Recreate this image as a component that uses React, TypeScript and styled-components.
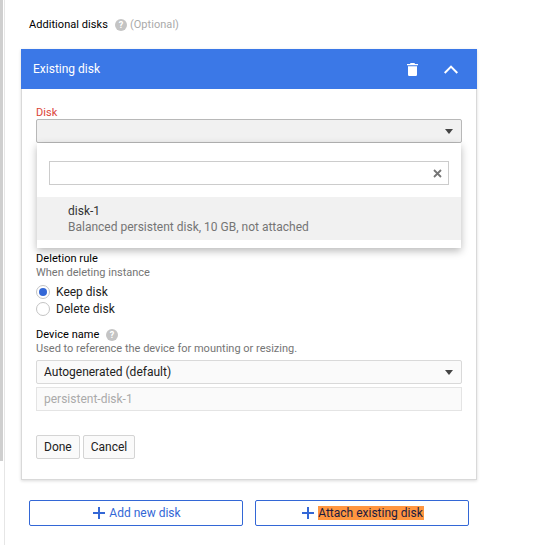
import React from "react";
import styled, { createGlobalStyle } from "styled-components";

const GlobalStyle = createGlobalStyle`
  html, body {
    margin: 0;
    padding: 0;
    background: #fff;
  }
  body {
    font-family: Roboto, "Liberation Sans", sans-serif;
    font-size: 12px;
    color: #212121;
  }
  * {
    box-sizing: border-box;
  }
`;

const Page = styled.div`
  width: 550px;
  height: 545px;
  overflow: hidden;
  display: flex;
`;

const Rail = styled.div`
  width: 5px;
  flex: none;
  height: 545px;
  background: linear-gradient(to right, #cfcfcf 0 3px, #fff 3px);
  background-size: 100% 461px;
  background-repeat: no-repeat;
  border-right: 1px solid #e6e6e6;
`;

const Content = styled.div`
  width: 472px;
  margin-left: 16px;
  padding-top: 18px;
  display: flex;
  flex-direction: column;
`;

const Heading = styled.div`
  display: flex;
  align-items: center;
  height: 13px;
  margin-left: 8px;
  font-size: 11px;
  letter-spacing: 0.05px;
  color: #000;
`;

const Optional = styled.span`
  color: #aaa;
  margin-left: 3px;
`;

const Card = styled.div`
  width: 456px;
  margin-top: 18px;
  box-shadow: 0 1px 3px rgba(0, 0, 0, 0.15);
`;

const CardHeader = styled.div`
  height: 40px;
  background: #3b78e7;
  color: #fff;
  font-size: 12px;
  padding: 0 19px 0 12px;
  display: flex;
  align-items: center;
`;

const CardTitle = styled.span`
  flex: 1;
`;

const HeaderActions = styled.div`
  display: flex;
  align-items: center;
  gap: 26px;
`;

const CardBody = styled.div`
  position: relative;
  height: 391px;
  padding: 16px 14px 0 14px;
  border: 1px solid #d9d9d9;
  border-top: none;
`;

const FieldLabel = styled.div<{ $error?: boolean }>`
  font-size: 11px;
  line-height: ${(p) => (p.$error ? "13px" : "14px")};
  padding-top: ${(p) => (p.$error ? "1px" : "0")};
  letter-spacing: 0.05px;
  color: ${(p) => (p.$error ? "#db4437" : "#000")};
  display: flex;
  align-items: center;
`;

const Hint = styled.div`
  font-size: 11px;
  line-height: 14px;
  color: #757575;
`;

const Select = styled.div<{ $active?: boolean }>`
  height: 24px;
  width: 426px;
  display: flex;
  align-items: center;
  padding: 0 7px;
  background: ${(p) => (p.$active ? "#f1f1f1" : "#fafafa")};
  border: 1px solid ${(p) => (p.$active ? "#b8b8b8" : "#d9d9d9")};
  border-radius: 2px;
  font-size: 12px;
  color: #212121;
`;

const SelectValue = styled.span`
  flex: 1;
`;

const Caret = styled.span`
  width: 0;
  height: 0;
  margin-right: 1px;
  border-left: 4px solid transparent;
  border-right: 4px solid transparent;
  border-top: 5px solid #444;
`;

const Dropdown = styled.div`
  position: absolute;
  top: 54px;
  left: 15px;
  width: 424px;
  height: 105px;
  background: #fff;
  box-shadow: 0 3px 8px rgba(0, 0, 0, 0.28);
  padding-top: 18px;
  z-index: 2;
`;

const SearchBox = styled.div`
  width: 400px;
  height: 24px;
  margin-left: 12px;
  border: 1px solid #ccc;
  display: flex;
  align-items: center;
  justify-content: flex-end;
  padding-right: 6px;
`;

const Option = styled.div`
  margin-top: 12px;
  height: 43px;
  background: #f1f1f1;
  padding: 6px 0 0 31px;
`;

const OptionName = styled.div`
  font-size: 12px;
  line-height: 16px;
  color: #333;
`;

const OptionDetail = styled.div`
  font-size: 12px;
  line-height: 17px;
  color: #757575;
`;

const RuleSection = styled.div`
  margin-top: 109px;
`;

const RadioList = styled.div`
  margin-top: 5px;
  display: flex;
  flex-direction: column;
  gap: 3px;
`;

const RadioRow = styled.div`
  display: flex;
  align-items: center;
  gap: 6px;
  height: 14px;
  font-size: 12px;
  color: #212121;
`;

const RadioCircle = styled.span<{ $checked?: boolean }>`
  width: 14px;
  height: 14px;
  border-radius: 50%;
  border: 1px solid #c4c4c4;
  background: #fff;
  display: flex;
  align-items: center;
  justify-content: center;
  &::after {
    content: "";
    width: 8px;
    height: 8px;
    border-radius: 50%;
    background: ${(p) => (p.$checked ? "#3367d6" : "transparent")};
  }
`;

const DeviceSection = styled.div`
  margin-top: 12px;
`;

const DeviceControls = styled.div`
  margin-top: 4px;
  display: flex;
  flex-direction: column;
  gap: 3px;
`;

const DisabledInput = styled.div`
  height: 24px;
  width: 426px;
  padding: 0 7px;
  display: flex;
  align-items: center;
  background: #fafafa;
  border: 1px solid #e4e4e4;
  font-size: 12px;
  color: #aaa;
`;

const FormActions = styled.div`
  margin-top: 24px;
  display: flex;
  gap: 3px;
`;

const PlainButton = styled.button`
  height: 24px;
  padding: 0 7px;
  background: #fafafa;
  border: 1px solid #d4d4d4;
  border-radius: 2px;
  font-family: inherit;
  font-size: 12px;
  color: #212121;
`;

const BottomBar = styled.div`
  margin: 20px 0 0 8px;
  display: flex;
  gap: 12px;
`;

const OutlineButton = styled.button`
  width: 214px;
  height: 26px;
  background: #fff;
  border: 1px solid #3367d6;
  border-radius: 2px;
  font-family: inherit;
  font-size: 12px;
  color: #3367d6;
  display: flex;
  align-items: center;
  justify-content: center;
  gap: 4px;
  padding: 0 0 0 2px;
`;

const Highlight = styled.span`
  background: #ff9640;
  color: #1a1a40;
  padding: 0 1px 0 0;
  line-height: 14px;
`;

const HelpIcon = ({ left = 7 }: { left?: number }) => (
  <svg width="12" height="12" viewBox="0 0 12 12" style={{ marginLeft: left }}>
    <circle cx="6" cy="6" r="6" fill="#c4c4c4" />
    <text x="6" y="9.2" fontSize="9" fontWeight="700" textAnchor="middle" fill="#fff" fontFamily="Roboto">
      ?
    </text>
  </svg>
);

const TrashIcon = () => (
  <svg width="11" height="13" viewBox="0 0 11 13" fill="#fff">
    <path d="M3.6 0h3.8l.7.9H11v1.4H0V.9h2.9z" />
    <path d="M1 3.2h9v8.2c0 .9-.7 1.6-1.6 1.6H2.6c-.9 0-1.6-.7-1.6-1.6z" />
  </svg>
);

const ChevronIcon = () => (
  <svg width="14" height="9" viewBox="0 0 14 9" fill="none" stroke="#fff" strokeWidth="2">
    <path d="M.7 8 7 1.6 13.3 8" />
  </svg>
);

const ClearIcon = () => (
  <svg width="9" height="9" viewBox="0 0 9 9" fill="none" stroke="#757575" strokeWidth="1.8">
    <path d="M1 1l7 7M8 1 1 8" />
  </svg>
);

const PlusIcon = () => (
  <svg width="12" height="12" viewBox="0 0 12 12" fill="#3367d6">
    <path d="M5 0h2v5h5v2H7v5H5V7H0V5h5z" />
  </svg>
);

export default function App() {
  return (
    <Page>
      <GlobalStyle />
      <Rail />
      <Content>
        <Heading>
          Additional disks
          <HelpIcon />
          <Optional>(Optional)</Optional>
        </Heading>
        <Card>
          <CardHeader>
            <CardTitle>Existing disk</CardTitle>
            <HeaderActions>
              <TrashIcon />
              <ChevronIcon />
            </HeaderActions>
          </CardHeader>
          <CardBody>
            <FieldLabel $error>Disk</FieldLabel>
            <Select $active>
              <SelectValue />
              <Caret />
            </Select>
            <Dropdown>
              <SearchBox>
                <ClearIcon />
              </SearchBox>
              <Option>
                <OptionName>disk-1</OptionName>
                <OptionDetail>Balanced persistent disk, 10 GB, not attached</OptionDetail>
              </Option>
            </Dropdown>
            <RuleSection>
              <FieldLabel>Deletion rule</FieldLabel>
              <Hint>When deleting instance</Hint>
              <RadioList>
                <RadioRow>
                  <RadioCircle $checked />
                  Keep disk
                </RadioRow>
                <RadioRow>
                  <RadioCircle />
                  Delete disk
                </RadioRow>
              </RadioList>
            </RuleSection>
            <DeviceSection>
              <FieldLabel>
                Device name
                <HelpIcon />
              </FieldLabel>
              <Hint>Used to reference the device for mounting or resizing.</Hint>
              <DeviceControls>
                <Select>
                  <SelectValue>Autogenerated (default)</SelectValue>
                  <Caret />
                </Select>
                <DisabledInput>persistent-disk-1</DisabledInput>
              </DeviceControls>
            </DeviceSection>
            <FormActions>
              <PlainButton>Done</PlainButton>
              <PlainButton>Cancel</PlainButton>
            </FormActions>
          </CardBody>
        </Card>
        <BottomBar>
          <OutlineButton>
            <PlusIcon />
            Add new disk
          </OutlineButton>
          <OutlineButton>
            <PlusIcon />
            <Highlight>Attach existing disk</Highlight>
          </OutlineButton>
        </BottomBar>
      </Content>
    </Page>
  );
}
